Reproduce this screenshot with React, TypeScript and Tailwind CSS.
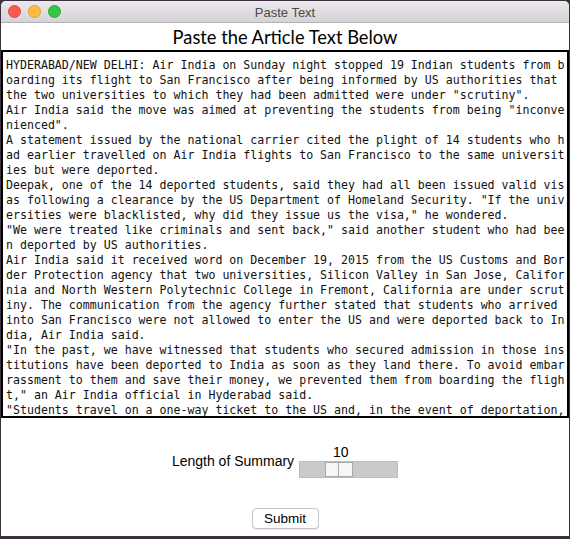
import React from "react";

const lines = [
  "HYDERABAD/NEW DELHI: Air India on Sunday night stopped 19 Indian students from b",
  "oarding its flight to San Francisco after being informed by US authorities that",
  "the two universities to which they had been admitted were under \"scrutiny\".",
  "Air India said the move was aimed at preventing the students from being \"inconve",
  "nienced\".",
  "A statement issued by the national carrier cited the plight of 14 students who h",
  "ad earlier travelled on Air India flights to San Francisco to the same universit",
  "ies but were deported.",
  "Deepak, one of the 14 deported students, said they had all been issued valid vis",
  "as following a clearance by the US Department of Homeland Security. \"If the univ",
  "ersities were blacklisted, why did they issue us the visa,\" he wondered.",
  "\"We were treated like criminals and sent back,\" said another student who had bee",
  "n deported by US authorities.",
  "Air India said it received word on December 19, 2015 from the US Customs and Bor",
  "der Protection agency that two universities, Silicon Valley in San Jose, Califor",
  "nia and North Western Polytechnic College in Fremont, California are under scrut",
  "iny. The communication from the agency further stated that students who arrived",
  "into San Francisco were not allowed to enter the US and were deported back to In",
  "dia, Air India said.",
  "\"In the past, we have witnessed that students who secured admission in those ins",
  "titutions have been deported to India as soon as they land there. To avoid embar",
  "rassment to them and save their money, we prevented them from boarding the fligh",
  "t,\" an Air India official in Hyderabad said.",
  "\"Students travel on a one-way ticket to the US and, in the event of deportation,",
];

export default function App() {
  return (
    <div className="w-[570px] h-[539px] bg-[#3c2f3e] pt-px pl-px">
      <div className="w-[568px] h-[535px] bg-white flex flex-col rounded-t-[5px] overflow-hidden">
        <div className="relative h-[22px] shrink-0 bg-gradient-to-b from-[#ebe9eb] to-[#d5d3d5] border-b border-[#b5b3b5] flex items-center justify-center">
          <div className="absolute left-[7px] top-[4px] flex gap-[7px]">
            <div className="w-[13px] h-[13px] rounded-full bg-[#fc5753] border border-[#df4744]" />
            <div className="w-[13px] h-[13px] rounded-full bg-[#fdbc40] border border-[#de9f34]" />
            <div className="w-[13px] h-[13px] rounded-full bg-[#33c748] border border-[#27aa35]" />
          </div>
          <span className="text-[13px] text-[#4b4b4b] font-['Liberation_Sans',sans-serif] leading-none mt-px">
            Paste Text
          </span>
        </div>
        <div className="h-[27px] shrink-0 flex items-center justify-center">
          <span className="text-[18.3px] text-black font-['Lato',sans-serif] leading-none mt-px">
            Paste the Article Text Below
          </span>
        </div>
        <div className="h-[368px] shrink-0 border-2 border-black overflow-hidden pl-[3px] pt-[6px]">
          <div className="font-['DejaVu_Sans_Mono',monospace] text-[11.6px] leading-[15px] text-[#111] whitespace-pre">
            {lines.map((l, i) => (
              <div key={i}>{l}</div>
            ))}
          </div>
        </div>
        <div className="flex-1 flex flex-col items-center">
          <div className="mt-[27px] flex items-end gap-[5px] font-['Liberation_Sans',sans-serif]">
            <span className="text-[14px] text-black leading-none mb-[10px]">Length of Summary</span>
            <div className="flex flex-col items-start">
              <span className="text-[14px] text-black leading-none mb-[2px] ml-[34px]">10</span>
              <div className="relative w-[99px] h-[17px] bg-[#cacaca] border border-[#bdbdbd]">
                <div className="absolute left-[25px] top-0 h-[15px] flex">
                  <div className="w-[14px] h-[15px] bg-[#f6f6f6] border border-[#a9a9a9]" />
                  <div className="w-[14px] h-[15px] bg-[#f6f6f6] border border-[#a9a9a9] border-l-0" />
                </div>
              </div>
            </div>
          </div>
          <button className="mt-[30px] w-[67px] h-[21px] rounded-[4px] bg-white border border-[#c4c4c4] shadow-[0_1px_0_rgba(0,0,0,0.08)] text-[13.5px] text-black font-['Liberation_Sans',sans-serif] leading-none">
            Submit
          </button>
        </div>
      </div>
    </div>
  );
}
